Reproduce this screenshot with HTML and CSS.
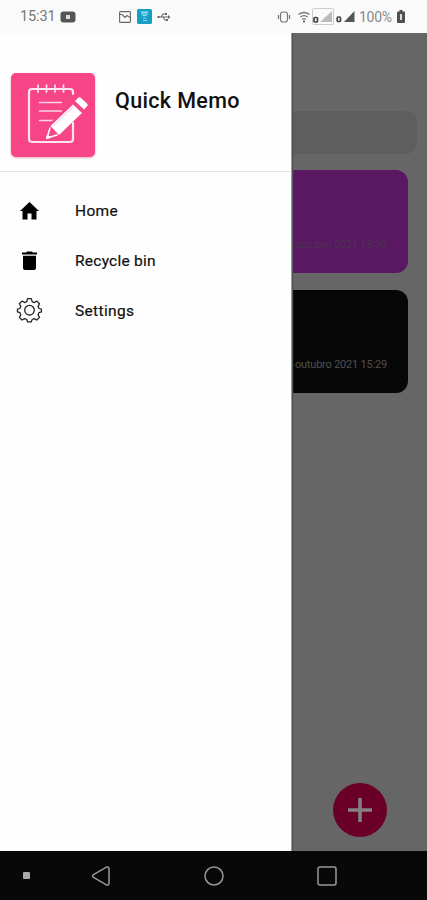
FILE: index.html
```html
<!DOCTYPE html>
<html lang="en">
<head>
<meta charset="utf-8">
<title>Quick Memo</title>
<link rel="stylesheet" href="styles.css">
</head>
<body>
<div class="phone">
  <header class="status">
    <span class="clock">15:31</span>
    <svg class="video" width="16" height="12" viewBox="0 0 16 12"><rect x=".5" y=".5" width="15" height="11" rx="3" fill="#555"/><path d="M6 4h4v4H6z" fill="#ddd"/></svg>
    <svg class="picture" width="12" height="12" viewBox="0 0 12 12" fill="none" stroke="#666" stroke-width="1.1"><rect x=".6" y=".6" width="10.800" height="10.800" rx="1"/><path d="M1 3.500h2l3 3 2-2 3 2"/></svg>
    <svg class="app" width="15" height="15" viewBox="0 0 15 15"><rect width="15" height="15" rx="1.500" fill="#169fc4"/><path d="M4 2h7v4H4z" fill="#55c7df"/><path d="M4 3.500h7M5.500 6.500h4M6 9h3.500M6 11.500h4" stroke="#8bd8e8" stroke-width="1.200"/></svg>
    <svg class="usb" width="14" height="10" viewBox="0 0 14 10" fill="none" stroke="#666" stroke-width="1.100"><path d="M1 5h11M4 5l2-3h3M6 5l2 3h2"/><path d="M11 3l2.500 2-2.500 2zM.5 4h2v2h-2zM8 1h2v2H8zM9 7h2v2H9z" fill="#666" stroke="none"/></svg>
    <div class="system">
      <svg width="14" height="12" viewBox="0 0 14 12" fill="none" stroke="#777" stroke-width="1.200"><rect x="3.500" y="1" width="7" height="10" rx="2.500"/><path d="M1.500 4v4M12.500 4v4"/></svg>
      <svg class="wifi" width="12" height="12" viewBox="0 0 12 12" fill="none" stroke="#777" stroke-width="1.300"><path d="M.5 3.500Q6-.5 11.500 3.500M2.300 6Q6 3.200 9.700 6M4.200 8.400Q6 7 7.800 8.400"/><circle cx="6" cy="10.500" r="1" fill="#444" stroke="none"/></svg>
      <svg width="22" height="17" viewBox="0 0 22 17"><rect x=".5" y=".5" width="21" height="16" rx="1" fill="#fafafa" stroke="#ccc"/><path d="M20 3v11H8z" fill="#bbb"/><rect x="2" y="9.500" width="3.500" height="4.500" rx="1" fill="none" stroke="#444" stroke-width="1.700"/></svg>
      <svg class="signal" width="19" height="12" viewBox="0 0 19 12"><path d="M18.500 0v11H8z" fill="#555"/><rect x="1.200" y="6" width="3.300" height="4.500" rx="1" fill="none" stroke="#444" stroke-width="1.700"/></svg>
      <span class="percent">100%</span>
      <svg class="battery" width="8" height="13" viewBox="0 0 8 13"><path d="M2.500 0h3v1.500H7q1 0 1 1v9.500q0 1-1 1H1q-1 0-1-1V2.500q0-1 1-1h1.500z" fill="#505050"/><path d="M3 4h2v6H3z" fill="#ddd"/></svg>
    </div>
  </header>

  <main class="screen">
    <div class="search"></div>
    <article class="note purple"><time>outubro 2021 15:30</time></article>
    <article class="note black"><time>outubro 2021 15:29</time></article>
    <div class="fab"><svg width="24" height="24" viewBox="0 0 24 24" stroke="#858082" stroke-width="3.600"><path d="M12 0v24M0 12h24"/></svg></div>

    <aside class="drawer">
      <div class="brand">
        <svg class="logo" width="84" height="84" viewBox="0 0 84 84" fill="none" stroke="#fff" stroke-linecap="round" stroke-linejoin="round">
          <rect width="84" height="84" rx="5" fill="#f74588" stroke="none"/>
          <path d="M62 21v-2q0-3-3-3H21q-3 0-3 3v47q0 3 3 3h38q3 0 3-3V50" stroke="#ffe3ee" stroke-width="2.200"/>
          <path d="M27 12v7M35.500 12v7M44 12v7M52.500 12v7" stroke="#ffe3ee" stroke-width="1.700"/>
          <path d="M28.500 29.500h22M28.500 38h22M28.500 47.500h15" stroke="#ffd3e3" stroke-width="1.500"/>
          <path d="M35 66l4-14 25-24 8 8-25 25z" fill="#f74588" stroke="#f74588" stroke-width="3"/>
          <path d="M39.500 53l22.500-21.500 9 8.500-23 22zM64 28l3-3q1.500-1.500 3 0l6 5.500q1.500 1.500 0 3l-3 3z" fill="#fff" stroke="none"/>
          <path d="M39 55l-3 10 10-3" stroke-width="1.500"/><path d="M35 66l1-5 4 4z" fill="#fff" stroke="none"/>
          <path d="M43 52.500L62 34" stroke="#f9a0c1" stroke-width=".7"/>
        </svg>
        <h1>Quick Memo</h1>
      </div>
      <nav class="menu">
        <a><svg width="28" height="28" viewBox="0 0 28 28"><path d="M14.500 5l9.500 9h-2.500v8.500h-5v-6h-4v6h-5V14H5z"/></svg><span>Home</span></a>
        <a><svg width="28" height="28" viewBox="0 0 28 28"><path d="M7 5.500h4l1-1h5l1 1h4V7.500H7zM8 8.800h13v12.200q0 2-2 2h-9q-2 0-2-2z"/></svg><span class="recycle">Recycle bin</span></a>
        <a><svg width="28" height="28" viewBox="0 0 28 28" fill="none" stroke="#222" stroke-width="1.300" stroke-linejoin="round"><path transform="translate(1 .8) scale(.96)" d="M12 2h4l.8 3 2.200 1 2.700-1.500 2.800 2.800L23 10l.9 2.200 2.600.6v3l-2.600.7-.9 2.200 1.500 2.700-2.800 2.800L19 22.700l-2.200.9L16 26h-4l-.8-2.400-2.200-.9-2.700 1.500-2.800-2.800L5 18.700l-.9-2.200-2.600-.7v-3l2.600-.6L5 10 3.500 7.300l2.800-2.800L9 6l2.200-1z"/><circle cx="14.500" cy="14.200" r="4.800"/></svg><span>Settings</span></a>
      </nav>
    </aside>
  </main>

  <footer class="navbar">
    <i class="dot"></i>
    <svg width="20" height="22" viewBox="0 0 20 22"><path d="M2.500 9.700L15 2.300Q18 1 18 4v14q0 3-3 1.700L2.500 12.300Q.5 11 2.500 9.700z"/></svg>
    <svg width="22" height="22" viewBox="0 0 22 22"><circle cx="11" cy="11" r="9"/></svg>
    <svg width="22" height="22" viewBox="0 0 22 22"><rect x="2" y="2" width="18" height="18" rx="2"/></svg>
  </footer>
</div>
</body>
</html>
```
FILE: styles.css
```css
* { box-sizing: border-box; }
body { margin: 0; font-family: Roboto, sans-serif; }
.phone { width: 427px; height: 900px; display: flex; flex-direction: column; overflow: hidden; }
svg { display: block; flex: none; }

.status { height: 33px; flex: none; display: flex; align-items: center; padding: 0 22px 0 20px; background: #fafafa; color: #777; font-size: 14.5px; }
.clock { width: 40px; letter-spacing: -.1px; }
.picture { margin-left: 43px; }
.app { margin-left: 6px; }
.usb { margin-left: 5px; }
.system { margin-left: auto; display: flex; align-items: center; }
.wifi { margin-left: 7px; }
.system .wifi + svg { margin-left: 2px; }
.signal { margin-left: 2px; }
.percent { margin-left: 4px; width: 34px; font-size: 14px; letter-spacing: -.25px; color: #888; }
.battery { margin-left: 4px; }

.screen { position: relative; flex: 1; overflow: hidden; background: #666; padding: 78px 10px 0; }
.search { height: 43px; border-radius: 12px; background: #5e5e5e; }
.note { height: 103px; border-radius: 12px; margin: 17px 9px 0 10px; padding: 68px 21px 0; text-align: right; }
.note time { display: block; font-size: 11px; line-height: 14px; letter-spacing: -.2px; white-space: nowrap; }
.purple { margin-top: 16px; background: #5a1762; color: #493451; }
.black { background: #070707; color: #505050; }
.fab { position: absolute; right: 40px; bottom: 14px; width: 54px; height: 54px; border-radius: 50%; background: #6a0027; display: flex; align-items: center; justify-content: center; }

.drawer { position: absolute; left: 0; top: 0; bottom: 0; width: 292px; background: #fefefe; border-right: 1px solid #999; box-shadow: 1px 0 1px #555; }
.brand { height: 139px; display: flex; padding: 40px 0 0 11px; border-bottom: 1px solid #e5e5e5; }
.logo { filter: drop-shadow(0 1px 1px #e5a5bc); }
h1 { margin: 15px 0 0 20px; font-size: 21.5px; line-height: 26px; font-weight: 500; letter-spacing: .35px; color: #111; white-space: nowrap; }
.menu { padding-top: 14px; }
.menu a { height: 49.7px; display: flex; align-items: center; padding-left: 15px; gap: 32px; font-size: 15.5px; color: #111; -webkit-text-stroke: .2px #111; }
.menu span { letter-spacing: .35px; padding-top: 1px; }
.menu .recycle { letter-spacing: .25px; }

.navbar { height: 49px; flex: none; display: flex; align-items: center; background: #080808; }
.navbar svg { fill: none; stroke: #999; stroke-width: 1.5; }
.dot { width: 7px; height: 7px; margin: 0 61px 0 23px; background: #aaa; border-radius: 1px; }
.navbar svg + svg { margin-left: 91.5px; }
```
